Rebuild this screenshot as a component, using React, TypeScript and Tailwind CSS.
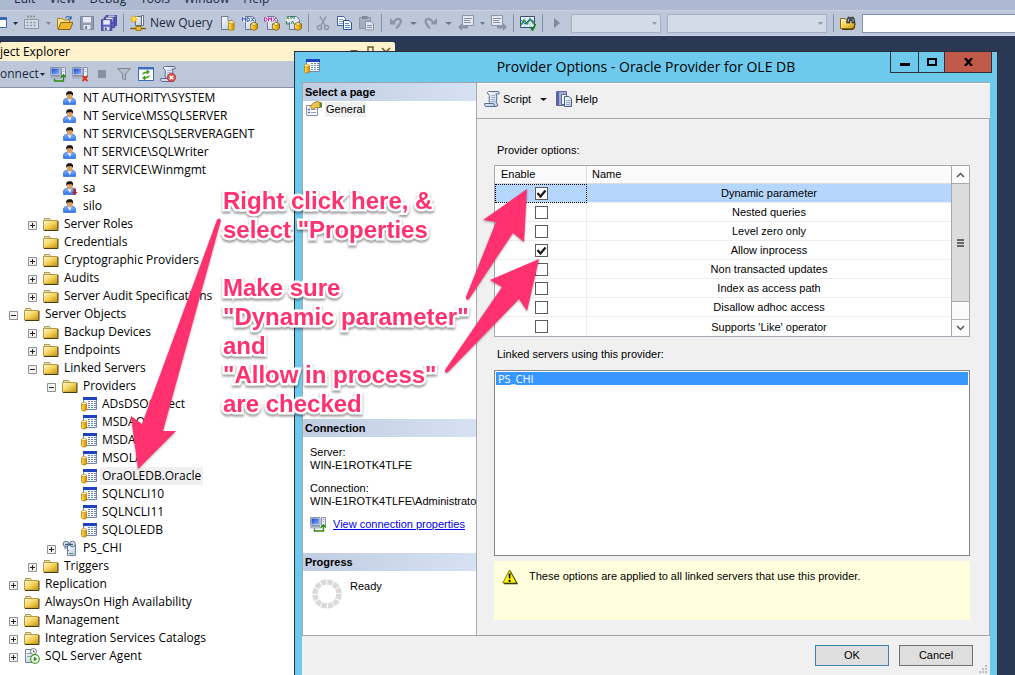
import React from "react";

type IconProps = { children: React.ReactNode; w?: number; box?: string };

function Icon({ children, w = 16, box = "w-4" }: IconProps) {
  return (
    <svg viewBox={`0 0 ${w} 16`} className={`h-4 shrink-0 ${box}`} aria-hidden="true">
      {children}
    </svg>
  );
}

function Defs() {
  return (
    <svg className="absolute h-0 w-0" aria-hidden="true">
      <defs>
        <linearGradient id="folder" x1="0" y1="0" x2="1" y2="1">
          <stop offset="0" stopColor="#fff9d8" />
          <stop offset="0.5" stopColor="#f4d257" />
          <stop offset="1" stopColor="#c48f08" />
        </linearGradient>
        <linearGradient id="drum" x1="0" y1="0" x2="1" y2="0">
          <stop offset="0" stopColor="#fbe27a" />
          <stop offset="0.5" stopColor="#f2b90f" />
          <stop offset="1" stopColor="#c78a00" />
        </linearGradient>
        <linearGradient id="shirt" x1="0" y1="0" x2="0" y2="1">
          <stop offset="0" stopColor="#9cc4ff" />
          <stop offset="1" stopColor="#2f72e8" />
        </linearGradient>
        <linearGradient id="screen" x1="0" y1="0" x2="1" y2="1">
          <stop offset="0" stopColor="#1340c8" />
          <stop offset="1" stopColor="#8ab8ff" />
        </linearGradient>
        <linearGradient id="paper" x1="0" y1="0" x2="1" y2="1">
          <stop offset="0" stopColor="#ffffff" />
          <stop offset="1" stopColor="#b4c4de" />
        </linearGradient>
      </defs>
    </svg>
  );
}

const FolderIcon = () => (
  <Icon>
    <path d="M1.500 4V2.500h5l1 1.500" fill="#f3e3a0" stroke="#a89a62" />
    <path d="M.5 4.500h14v9.500H.5z" fill="url(#folder)" stroke="#b49b4a" />
    <path d="M15 5v9.500H1" fill="none" stroke="#4c3c0c" />
  </Icon>
);

const UserIcon = ({ disabled = false }: { disabled?: boolean }) => (
  <Icon>
    <path d="M1.500 14.500v-3.500q0-2 2.500-2.500l3.500-1.500 3.500 1.500q2.500 .5 2.500 2.500v3.500z" fill="url(#shirt)" stroke="#3a76d6" strokeWidth=".8" />
    <path d="M5.500 8.500h4L8 13z" fill="#fff" />
    <path d="M5 4h5.500v3.500L8.800 9.500h-2L5 7.500z" fill="#d9a066" />
    <path d="M4.200 6V3L6 1.300h3.500L11 3v3L9.800 4.300H5.500z" fill="#1c1410" />
    {disabled && <path d="M11.500 8.500H14V12h1.500l-2.800 3.200L10 12h1.500z" fill="#b8202c" />}
  </Icon>
);

const Drum = ({ x = 0, y = 6, s = 1 }: { x?: number; y?: number; s?: number }) => (
  <g transform={`translate(${x} ${y}) scale(${s})`}>
    <path d="M.5 2v6q0 1.500 2.500 1.500T5.500 8V2z" fill="url(#drum)" stroke="#a87400" strokeWidth=".7" />
    <ellipse cx="3" cy="2" rx="2.500" ry="1.300" fill="#fff0a8" stroke="#b88a10" strokeWidth=".6" />
  </g>
);

const ProviderIcon = () => (
  <Icon>
    <path d="M2.500 1.500h13v12h-13z" fill="#f4f8ff" stroke="#6d86ba" />
    <path d="M2 1h14v3H2z" fill="#1f43bc" />
    <path d="M7 5.500h8M7 7.500h8M7 9.500h8M7 11.500h8" stroke="#7486b0" strokeDasharray="2 1" />
    <Drum x={0} y={5.500} />
  </Icon>
);

const LinkedIcon = () => (
  <Icon>
    <path d="M5.500 4.500h8v11h-8z" fill="url(#paper)" stroke="#6e83a8" />
    <path d="M7 13.500h4" stroke="#3fa33f" />
    <circle cx="4" cy="4" r="2.800" fill="#dfe8f5" stroke="#5c7396" />
    <circle cx="10.500" cy="4" r="2.800" fill="#dfe8f5" stroke="#5c7396" />
    <path d="M3 4.500h8" stroke="#3f5577" strokeWidth="1.500" />
    <path d="M2 8h4M5 10.500h2" stroke="#5c7396" />
  </Icon>
);

const AgentIcon = () => (
  <Icon>
    <path d="M1.500 1.500h9v13h-9z" fill="url(#paper)" stroke="#6d7f9c" />
    <path d="M3 5.500h5M3 8.500h5" stroke="#8fa1bd" />
    <circle cx="9.500" cy="3.500" r="3" fill="#fff" stroke="#777" />
    <path d="M9.500 2v2h1.500" fill="none" stroke="#444" strokeWidth=".8" />
    <circle cx="11" cy="11" r="4.300" fill="#f4fff0" stroke="#4c9a2e" strokeWidth="1.200" />
    <path d="M9.800 8.500v5l3.400-2.500z" fill="#2e8b1e" />
  </Icon>
);

const Down = ({ color = "#1e2a3e", box = "w-[5px]" }: { color?: string; box?: string }) => (
  <svg viewBox="0 0 6 3" preserveAspectRatio="none" className={`h-[3px] shrink-0 ${box}`} aria-hidden="true">
    <path d="M0 0h6L3 3z" fill={color} />
  </svg>
);

const Sep = () => <span className="h-[18px] w-px shrink-0 bg-[#8591a8]" />;

const ConnectIcon = ({ off = false }: { off?: boolean }) => (
  <Icon>
    <path d="M.5 1.500h9.500v8H.5z" fill="#e6e8ee" stroke="#8992a6" />
    <path d="M1.500 2.500h7.500v6H1.500z" fill="url(#screen)" />
    <path d="M1 10.500h9l1 1.500H.5z" fill="#c6ccd9" stroke="#8992a6" strokeWidth=".7" />
    <path d="M11.500 1.500h4v9h-4z" fill="#eef1f8" stroke="#8992a6" />
    <path d="M12.500 3.500h2M12.500 5.500h2" stroke="#8992a6" strokeWidth=".7" />
    {off ? (
      <path d="M10.500 10l5 5M15.500 10l-5 5" stroke="#e0301c" strokeWidth="1.800" />
    ) : (
      <path d="M4.500 12.500v2.500h9v-5M11 11.500l2.500-2.800 2.500 2.800" fill="none" stroke="#2f8a10" strokeWidth="1.400" />
    )}
  </Icon>
);

const ScriptIcon = ({ error = false }: { error?: boolean }) => (
  <Icon>
    <path d="M4 3q-1.500-2 .5-2.500H14q2 .5 1 2.500h-3q1.500 3 .5 6t1.500 5q-.5 1.500-2 1.500H2Q0 15 .8 12.500H6Q4.500 10 5.300 7T4 3z" fill="url(#paper)" stroke="#5b6e93" />
    <path d="M7 4.500h4M7.300 6.500h4M7 8.500h4M7 10.500h4" stroke="#9aabca" strokeWidth=".8" />
    <path d="M.8 12.500h8.700l1 2.500" fill="none" stroke="#5b6e93" />
    {error && (
      <>
        <circle cx="11.500" cy="11.500" r="4.200" fill="#d9534a" stroke="#a22" strokeWidth=".6" />
        <path d="M9.700 9.700l3.600 3.600M13.300 9.700l-3.600 3.600" stroke="#fff" strokeWidth="1.500" />
      </>
    )}
  </Icon>
);

const HelpIcon = () => (
  <Icon>
    <path d="M.5 .5h10v14H.5z" fill="#a3aada" stroke="#5f689e" />
    <path d="M1 1h2v13H1z" fill="#5a64a4" />
    <path d="M5.500 3.500h4.500l1.500 2v8h-6z" fill="#f2f5fc" stroke="#596c92" />
    <path d="M8.500 5.500h4.500l2.500 2.500v7.500h-7z" fill="url(#paper)" stroke="#4d5f84" />
    <path d="M10 9.500h4M10 11.500h4M10 13.500h4" stroke="#8fa0bf" strokeWidth=".8" />
  </Icon>
);

const PropertiesIcon = () => (
  <Icon>
    <path d="M.5 4.500h11v10H.5z" fill="#fdfdff" stroke="#8590a8" />
    <path d="M2 8.500h2M2 11.500h2" stroke="#3a62c8" strokeWidth="1.500" />
    <path d="M5 8.500h5M5 11.500h5" stroke="#8d9bb8" />
    <path d="M4 5.500l4-4 4-1 3 1.500v4L12 7 9.500 6.500 6.500 8.500z" fill="#f0c34a" stroke="#8a6312" strokeWidth=".8" />
    <path d="M13.500 1.500H16v5h-2.500z" fill="#4e8a3c" />
  </Icon>
);

const WarnIcon = () => (
  <Icon>
    <path d="M8 1L15.500 14.500H1z" fill="#222" transform="translate(.6 .8)" />
    <path d="M7.500 1L14.500 14H.8z" fill="#fff200" stroke="#6b6500" strokeWidth=".8" />
    <path d="M6.500 4.500h2.200l-.5 5.300H7z" fill="#000" />
    <circle cx="7.600" cy="11.900" r="1.100" fill="#000" />
  </Icon>
);

const NewQueryIcon = () => (
  <Icon>
    <path d="M5.500 1.500h6v9h-6z" fill="url(#paper)" stroke="#60708c" />
    <path d="M11.500 .5h2v10h-2z" fill="#fff" stroke="#4a5870" strokeWidth=".8" />
    <path d="M0 13.500h16" stroke="#8d6410" strokeWidth="1.500" />
    <path d="M8.500 10v2" stroke="#8d6410" strokeWidth="1.500" />
    <path d="M6 11.500h5v4H6z" fill="#f5c02a" stroke="#8a5e00" strokeWidth=".7" />
    <path d="M4 0v8M0 4h8M1.200 1.200l5.600 5.600M6.800 1.200L1.200 6.800" stroke="#f7a80a" strokeWidth="1.200" />
    <circle cx="4" cy="4" r="2" fill="#ffe44a" />
  </Icon>
);

const PlainQueryIcon = () => (
  <Icon>
    <path d="M1.500 1.500h6.500l4 4v9H1.500z" fill="url(#paper)" stroke="#6a7a98" />
    <path d="M8 1.500v4h4" fill="#dbe3f1" stroke="#6a7a98" />
    <Drum x={8} y={5} s={1.100} />
  </Icon>
);

const TypedQueryIcon = ({ tone, glyph }: { tone: string; glyph: string }) => (
  <Icon>
    <path d="M3.500 1.500h7l3 3v10h-10z" fill="url(#paper)" stroke="#6a7a98" />
    <path d="M0 2h11v5H0z" fill="#e4eaf5" />
    <path d={glyph} fill="none" stroke={tone} strokeWidth=".9" />
    <g transform="translate(8 7)">
      <path d="M.5 2l3.500-1.500L7.500 2v4.500L4 8.500.5 6.500z" fill="url(#drum)" stroke="#7d5600" strokeWidth=".7" />
      <path d="M.5 2L4 3.500 7.500 2 4 .5z" fill="#fff0a8" stroke="#7d5600" strokeWidth=".5" />
    </g>
  </Icon>
);

const glyphs = {
  mdx: "M.5 6.500v-4l1.500 2 1.500-2v4M5 2.500v4q2.500 0 2.500-2T5 2.500M9 2.500l3 4M12 2.500l-3 4",
  dmx: "M.5 2.500v4q2.500 0 2.500-2T.5 2.500M4.500 6.500v-4l1.500 2 1.500-2v4M9 2.500l3 4M12 2.500l-3 4",
  xmla: "M.5 1l2.500 3M3 1L.5 4M5 4V1l1.500 1.500L8 1v3M.5 6v3H3M5 9l1.500-3L8 9",
};

const SaveShape = ({ fill, line }: { fill: string; line: string }) => (
  <>
    <path d="M1.500 1.500h13v13h-13z" fill={fill} stroke={line} />
    <path d="M4 2h8v5.500H4z" fill="#e8ecf4" />
    <path d="M4.500 10h7v4.500h-7z" fill="#dfe4ee" />
    <path d="M6 11h2v3H6z" fill={line} />
  </>
);

function MenuBar() {
  const items = ["Edit", "View", "Debug", "Tools", "Window", "Help"];
  return (
    <nav className="flex h-[10px] shrink-0 items-end gap-[14px] overflow-hidden bg-[#adb9d0] pb-[3px] pl-[14px] text-xs leading-4 text-[#1b293e]">
      {items.map((t) => (
        <button key={t} type="button">{t}</button>
      ))}
    </nav>
  );
}

function MainToolbar() {
  const grey = "#8b95a8";
  return (
    <div className="flex h-[26px] shrink-0 items-center gap-[6px] border-y border-[#c9d2e2] bg-[#bcc7d9] text-xs text-[#1b293e]">
      <Icon w={7} box="w-[7px]">
        <path d="M-1 2.500h7.500v10H-1z" fill="#fff" stroke="#3c66b4" />
        <path d="M-1 2h8v3h-8z" fill="#3c66b4" />
      </Icon>
      <Down />
      <Icon>
        <path d="M.5 4.500h14v9H.5z" fill="#d5dae4" stroke={grey} />
        <path d="M3 1.500h9" stroke={grey} strokeWidth="2" strokeDasharray="2 1" />
        <path d="M2.500 7.500h10M2.500 10.500h10" stroke={grey} strokeWidth="1.500" strokeDasharray="2 1.500" />
      </Icon>
      <Down color="#7d8799" />
      <Icon>
        <path d="M.5 13.500v-10h5l1.500 1.500h5.500v3" fill="#f7e08a" stroke="#a9801b" />
        <path d="M1 14.500l3-7h12l-3 7z" fill="#f0b82e" stroke="#8a5f08" />
        <path d="M8.500 3q2.500-3 5 0M14 1v3h-3" fill="none" stroke="#2f5ea8" strokeWidth="1.200" />
      </Icon>
      <Icon><SaveShape fill="#929cae" line="#7b8598" /></Icon>
      <Icon>
        <g transform="translate(4 -1) scale(.8)"><SaveShape fill="#5a5fc4" line="#34388c" /></g>
        <g transform="translate(2 1) scale(.8)"><SaveShape fill="#5a5fc4" line="#34388c" /></g>
        <g transform="translate(-1 3.500) scale(.82)"><SaveShape fill="#5a5fc4" line="#34388c" /></g>
      </Icon>
      <Sep />
      <button type="button" className="flex items-center gap-1 pr-px whitespace-nowrap">
        <NewQueryIcon />
        New Query
      </button>
      <PlainQueryIcon />
      <TypedQueryIcon tone="#2c50b0" glyph={glyphs.mdx} />
      <TypedQueryIcon tone="#b8209c" glyph={glyphs.dmx} />
      <TypedQueryIcon tone="#1f7a3c" glyph={glyphs.xmla} />
      <Sep />
      <Icon>
        <path d="M5 1.500l5 9M11 1.500l-5 9" stroke={grey} strokeWidth="1.500" />
        <circle cx="4.500" cy="12.500" r="2" fill="none" stroke={grey} strokeWidth="1.400" />
        <circle cx="11.500" cy="12.500" r="2" fill="none" stroke={grey} strokeWidth="1.400" />
      </Icon>
      <Icon>
        <path d="M.5 1.500h6l2 2v7h-8z" fill="#fff" stroke="#3c5fa8" />
        <path d="M2 4.500h4M2 6.500h5M2 8.500h5" stroke="#7d9bd6" />
        <path d="M6.500 5.500h5.500l2.500 2.500v6.500H6.500z" fill="#fff" stroke="#27509c" />
        <path d="M8 8.500h4M8 10.500h5M8 12.500h5" stroke="#5b84d0" />
      </Icon>
      <Icon>
        <path d="M.5 2.500h11v11H.5z" fill="#a7afbe" stroke={grey} />
        <path d="M3 1h5.500v3H3z" fill="#7f899c" />
        <path d="M6.500 6.500h5.500l2.500 2.500v6h-8z" fill="#dde2eb" stroke={grey} />
        <path d="M8 10.500h5M8 12.500h5" stroke={grey} />
      </Icon>
      <Sep />
      <Icon>
        <path d="M3 7h3Q9 2.500 12 4.500t-4 9" fill="none" stroke={grey} strokeWidth="2.200" />
        <path d="M2 3v6.500h6.500z" fill={grey} />
      </Icon>
      <Down color="#6d778a" box="w-[7px]" />
      <Icon>
        <path d="M12 7H9.500Q6.500 2.500 3.500 4.500T7 13.500" fill="none" stroke={grey} strokeWidth="2.200" />
        <path d="M14 3v6.500H7.500z" fill={grey} />
      </Icon>
      <Down color="#6d778a" box="w-[7px]" />
      <Icon>
        <path d="M4.500 .5h11v10h-11z" fill="#e3e7ef" stroke={grey} />
        <path d="M6 3.500h8M6 5.500h6M6 7.500h7" stroke={grey} />
        <path d="M0 12l4-4v2.500h6v3H4V16z" fill={grey} />
      </Icon>
      <Down color="#6d778a" />
      <Icon>
        <path d="M.5 .5h11v10H.5z" fill="#e3e7ef" stroke={grey} />
        <path d="M2 3.500h8M2 5.500h6M2 7.500h7" stroke={grey} />
        <path d="M16 12l-4-4v2.500H6v3h6V16z" fill={grey} />
      </Icon>
      <Sep />
      <Icon>
        <path d="M.5 1.500h14v11H.5z" fill="#e8f3ff" stroke="#3b4e74" />
        <path d="M1 5.500h13M1 9h13M5 2v10M10 2v10" stroke="#a8c2de" strokeWidth=".7" />
        <path d="M1 10l3-5 3 4 3-5 4 5" fill="none" stroke="#2c9a2c" strokeWidth="1.500" />
        <path d="M1 5l4 4 5-5 4 3" fill="none" stroke="#3157bf" />
        <path d="M10.500 12l2 3 3-6" fill="none" stroke="#148214" strokeWidth="1.800" />
      </Icon>
      <Sep />
      <Icon><path d="M5 3l6 5L5 13z" fill="#7f8a9e" /></Icon>
      <button type="button" aria-label="Database" className="flex h-[19px] w-[90px] shrink-0 items-center justify-end border border-[#a3afc4] bg-[#d3dbe8] pr-[3px]">
        <Down color="#8d98ab" />
      </button>
      <button type="button" aria-label="Configuration" className="flex h-[19px] w-40 shrink-0 items-center justify-end border border-[#a3afc4] bg-[#d3dbe8] pr-[3px]">
        <Down color="#8d98ab" />
      </button>
      <Sep />
      <Icon>
        <path d="M.5 13.500v-10h4.500L6.500 5h8v8.500z" fill="url(#folder)" stroke="#8a6a14" />
        <path d="M2 14.500h11l2.500-6" fill="none" stroke="#4c3c0c" />
        <path d="M6.500 8l1-5q1-2 2.500-.5h1.500q1.500-1.500 2.500 .5l1 5h-3V5.500h-2V8z" fill="#4a4e58" stroke="#23252c" strokeWidth=".6" />
        <path d="M8.500 4v2.500M13 4v2.500" stroke="#c8ccd6" strokeWidth=".8" />
      </Icon>
      <input aria-label="Find" className="h-[19px] min-w-0 flex-1 border border-r-0 border-[#8591a8] bg-white px-1" />
    </div>
  );
}

type Node = { label: string; depth: 0 | 1 | 2 | 3; sign?: "+" | "-"; icon: () => React.ReactElement; selected?: boolean };

const DisabledUser = () => <UserIcon disabled />;
const User = () => <UserIcon />;

const tree: Node[] = [
  { label: "NT AUTHORITY\\SYSTEM", depth: 2, icon: User },
  { label: "NT Service\\MSSQLSERVER", depth: 2, icon: User },
  { label: "NT SERVICE\\SQLSERVERAGENT", depth: 2, icon: User },
  { label: "NT SERVICE\\SQLWriter", depth: 2, icon: User },
  { label: "NT SERVICE\\Winmgmt", depth: 2, icon: User },
  { label: "sa", depth: 2, icon: DisabledUser },
  { label: "silo", depth: 2, icon: User },
  { label: "Server Roles", depth: 1, sign: "+", icon: FolderIcon },
  { label: "Credentials", depth: 1, icon: FolderIcon },
  { label: "Cryptographic Providers", depth: 1, sign: "+", icon: FolderIcon },
  { label: "Audits", depth: 1, sign: "+", icon: FolderIcon },
  { label: "Server Audit Specifications", depth: 1, sign: "+", icon: FolderIcon },
  { label: "Server Objects", depth: 0, sign: "-", icon: FolderIcon },
  { label: "Backup Devices", depth: 1, sign: "+", icon: FolderIcon },
  { label: "Endpoints", depth: 1, sign: "+", icon: FolderIcon },
  { label: "Linked Servers", depth: 1, sign: "-", icon: FolderIcon },
  { label: "Providers", depth: 2, sign: "-", icon: FolderIcon },
  { label: "ADsDSOObject", depth: 3, icon: ProviderIcon },
  { label: "MSDAOSP", depth: 3, icon: ProviderIcon },
  { label: "MSDASQL", depth: 3, icon: ProviderIcon },
  { label: "MSOLAP", depth: 3, icon: ProviderIcon },
  { label: "OraOLEDB.Oracle", depth: 3, icon: ProviderIcon, selected: true },
  { label: "SQLNCLI10", depth: 3, icon: ProviderIcon },
  { label: "SQLNCLI11", depth: 3, icon: ProviderIcon },
  { label: "SQLOLEDB", depth: 3, icon: ProviderIcon },
  { label: "PS_CHI", depth: 2, sign: "+", icon: LinkedIcon },
  { label: "Triggers", depth: 1, sign: "+", icon: FolderIcon },
  { label: "Replication", depth: 0, sign: "+", icon: FolderIcon },
  { label: "AlwaysOn High Availability", depth: 0, icon: FolderIcon },
  { label: "Management", depth: 0, sign: "+", icon: FolderIcon },
  { label: "Integration Services Catalogs", depth: 0, sign: "+", icon: FolderIcon },
  { label: "SQL Server Agent", depth: 0, sign: "+", icon: AgentIcon },
];

const indent = ["pl-[9px]", "pl-[28px]", "pl-[47px]", "pl-[66px]"];

function TreeRow({ node }: { node: Node }) {
  const NodeIcon = node.icon;
  return (
    <li role="treeitem" className={`flex h-[18px] items-center ${indent[node.depth]}`}>
      <svg viewBox="0 0 9 9" className="mt-[2px] mr-[6px] h-[9px] w-[9px] shrink-0" aria-hidden="true">
        {node.sign && (
          <>
            <path d="M.5.5h8v8h-8z" fill="#f2f2f2" stroke="#919191" />
            <path d={node.sign === "+" ? "M2 4.500h5M4.500 2v5" : "M2 4.500h5"} stroke="#222" />
          </>
        )}
      </svg>
      <NodeIcon />
      <span className={`ml-[3px] px-[2px] leading-[18px] whitespace-nowrap ${node.selected ? "bg-[#f0f0f0]" : ""}`}>{node.label}</span>
    </li>
  );
}

function ObjectExplorer() {
  return (
    <section className="mt-[6px] flex w-[395px] flex-1 flex-col overflow-hidden rounded-t-[3px] bg-white text-xs">
      <header className="flex h-[19px] shrink-0 items-center justify-between bg-[#fff2cc] pr-1">
        <h2>ject Explorer</h2>
        <svg viewBox="0 0 44 12" className="h-3 w-11" aria-hidden="true">
          <path d="M3 4h8L7 8z" fill="#6b5a35" />
          <path d="M21 1h5v7h-5zM19 8.500h9M23.500 9v3" fill="none" stroke="#6b5a35" strokeWidth="1.500" />
          <path d="M35 2l8 8M43 2l-8 8" stroke="#6b5a35" strokeWidth="1.700" />
        </svg>
      </header>
      <div className="flex h-[27px] shrink-0 items-center gap-[6px] border-b border-[#8591a8] bg-[#bcc7d9] text-[#1b293e]">
        <button type="button" className="flex w-11 items-center gap-px">
          onnect
          <Down />
        </button>
        <ConnectIcon />
        <ConnectIcon off />
        <Icon><path d="M4 4h8v8H4z" fill="#8a909b" /></Icon>
        <Icon><path d="M1.500 2.500h13L9.500 8v6l-3-1.500V8z" fill="#b4bac6" stroke="#7d8798" /></Icon>
        <Icon>
          <path d="M.5 1.500h15v13H.5z" fill="#fff" stroke="#3c6bbf" />
          <path d="M0 1h16v2.500H0z" fill="#3c6bbf" />
          <path d="M4.500 8.500Q5 5.500 8.500 6H11M9 4v4l2.500-2zM11.500 9.500Q11 12 7.500 12H5M7 10v4l-2.500-2z" fill="#3a9a10" stroke="#3a9a10" strokeWidth=".8" />
        </Icon>
        <ScriptIcon error />
      </div>
      <ul role="tree" aria-label="Object Explorer" className="pt-px">
        {tree.map((n) => <TreeRow key={n.label} node={n} />)}
      </ul>
    </section>
  );
}

const options = [
  { name: "Dynamic parameter", on: true },
  { name: "Nested queries", on: false },
  { name: "Level zero only", on: false },
  { name: "Allow inprocess", on: true },
  { name: "Non transacted updates", on: false },
  { name: "Index as access path", on: false },
  { name: "Disallow adhoc access", on: false },
  { name: "Supports 'Like' operator", on: false },
];

function OptionsGrid() {
  return (
    <div className="flex border border-[#a5a8b0] bg-white">
      <table className="w-full flex-1 table-fixed border-separate border-spacing-0">
        <thead>
          <tr className="h-[18px] bg-[#fbfbfb] text-left">
            <th className="w-[92px] border-r border-b border-[#dcdcdc] p-0 pl-[6px] font-normal">Enable</th>
            <th className="border-b border-[#dcdcdc] p-0 pl-[5px] font-normal">Name</th>
          </tr>
        </thead>
        <tbody>
          {options.map((o, i) => (
            <tr key={o.name} className={`group h-[19px] ${i === 0 ? "bg-[#b5d7fd]" : ""}`}>
              <td className={`border-r border-b border-[#ededed] p-0 pl-px group-last:border-b-0 ${i === 0 ? "outline-1 -outline-offset-1 outline-dotted outline-black" : ""}`}>
                <span className="relative mx-auto block h-[13px] w-[13px]">
                  <input
                    type="checkbox"
                    defaultChecked={o.on}
                    aria-label={o.name}
                    className="peer block h-[13px] w-[13px] appearance-none border border-[#5c5c5c] bg-white"
                  />
                  <svg viewBox="0 0 13 13" className="pointer-events-none absolute inset-0 hidden h-[13px] w-[13px] peer-checked:block" aria-hidden="true">
                    <path d="M2.500 6l3 3.500 5-6" fill="none" stroke="#1a1a1a" strokeWidth="2.200" />
                  </svg>
                </span>
              </td>
              <td className="border-b border-[#ededed] p-0 pt-px text-center group-last:border-b-0">{o.name}</td>
            </tr>
          ))}
        </tbody>
      </table>
      <div className="flex w-[18px] shrink-0 flex-col border-l border-[#a5a8b0] bg-[#fbfbfb]">
        <button type="button" aria-label="Scroll up" className="flex h-[17px] items-center justify-center">
          <svg viewBox="0 0 9 6" className="h-[6px] w-[9px]"><path d="M1 5l3.500-3.500L8 5" fill="none" stroke="#555" strokeWidth="1.500" /></svg>
        </button>
        <div className="flex h-[119px] items-center justify-center border-y border-[#a5a8b0] bg-[#dcdcdc]">
          <svg viewBox="0 0 7 8" className="h-2 w-[7px]"><path d="M0 1h7M0 4h7M0 7h7" stroke="#666" strokeWidth="2" /></svg>
        </div>
        <div className="flex-1" />
        <button type="button" aria-label="Scroll down" className="flex h-[17px] items-center justify-center border-t border-[#b8b8b8]">
          <svg viewBox="0 0 9 6" className="h-[6px] w-[9px]"><path d="M1 1l3.500 3.500L8 1" fill="none" stroke="#555" strokeWidth="1.500" /></svg>
        </button>
      </div>
    </div>
  );
}

const SideHead = ({ children }: { children: string }) => (
  <h3 className="h-[18px] shrink-0 bg-linear-to-r from-[#c0cde2] to-[#d6e2f2] pl-[2px] leading-[18px] font-bold">{children}</h3>
);

function Sidebar() {
  return (
    <aside className="flex w-[175px] shrink-0 flex-col border-x border-[#a5a8b0] bg-white">
      <SideHead>Select a page</SideHead>
      <div className="flex flex-1 items-start gap-[3px] pl-[3px]">
        <PropertiesIcon />
        <button type="button" className="mt-px bg-[#f0f0f0] px-px leading-[15px]">General</button>
      </div>
      <SideHead>Connection</SideHead>
      <div className="flex h-[116px] shrink-0 flex-col gap-[10px] pt-[9px] pl-[7px] leading-[13px]">
        <p>Server:<br />WIN-E1ROTK4TLFE</p>
        <p className="whitespace-nowrap">Connection:<br />WIN-E1ROTK4TLFE\Administrato</p>
        <div className="-mt-[2px] flex items-center gap-[7px]">
          <ConnectIcon />
          <a href="#connection" className="text-[#0000ee] underline">View connection properties</a>
        </div>
      </div>
      <SideHead>Progress</SideHead>
      <div className="flex h-16 shrink-0 items-start gap-2 pt-2 pl-[9px]">
        <svg viewBox="0 0 30 30" className="h-[30px] w-[30px]" aria-hidden="true">
          <circle cx="15" cy="15" r="12" fill="none" stroke="#dadada" strokeWidth="5.500" strokeDasharray="5.280 1" />
        </svg>
        <span className="leading-[15px]">Ready</span>
      </div>
    </aside>
  );
}

function ProviderDialog() {
  return (
    <section
      role="dialog"
      aria-label="Provider Options"
      className="absolute top-[51px] right-[17px] bottom-0 left-[294px] flex flex-col border border-b-0 border-[#2c3038] bg-[#6dcaed] px-[7px] font-['Liberation_Sans',Arial,sans-serif] text-[11px] leading-[13px]"
    >
      <header className="relative flex h-[30px] shrink-0 items-center justify-center">
        <span className="absolute top-[6px] left-[2px]"><ProviderIcon /></span>
        <h1 className="font-['Open_Sans',sans-serif] text-sm leading-5">Provider Options - Oracle Provider for OLE DB</h1>
        <div className="absolute -top-px -right-[2px] flex h-[22px] border border-[#2c3038] text-black">
          <button type="button" aria-label="Minimize" className="flex w-7 items-center justify-center border-r border-[#2c3038]">
            <span className="mt-1 h-[3px] w-[10px] bg-black" />
          </button>
          <button type="button" aria-label="Maximize" className="flex w-[26px] items-center justify-center border-r border-[#2c3038]">
            <span className="h-2 w-[10px] border-2 border-black" />
          </button>
          <button type="button" aria-label="Close" className="flex w-[46px] items-center justify-center bg-[#c15a4b]">
            <svg viewBox="0 0 9 8" className="h-2 w-[9px]"><path d="M1 0l7 8M8 0L1 8" stroke="#000" strokeWidth="2.200" /></svg>
          </button>
        </div>
      </header>
      <div className="flex min-h-0 flex-1 border-y border-[#a0a4ac] bg-[#f0f0f0]">
        <Sidebar />
        <main className="flex min-w-0 flex-1 flex-col">
          <div className="flex h-9 shrink-0 items-center gap-2 border-b border-[#a5a8b0] pb-[3px] pl-[7px] shadow-[inset_0_1px_#fff]">
            <button type="button" className="flex items-center gap-[3px]"><ScriptIcon />Script</button>
            <button type="button" aria-label="Script options" className="flex w-[9px] justify-center"><Down box="w-[7px]" color="#111" /></button>
            <button type="button" className="flex items-center gap-[3px]"><HelpIcon />Help</button>
          </div>
          <div className="flex min-h-0 flex-1 flex-col border-r border-[#a5a8b0] pt-[25px] pr-[19px] pb-[15px] pl-[17px]">
            <h2 className="mb-2 pl-[3px]">Provider options:</h2>
            <OptionsGrid />
            <h2 className="mt-[11px] mb-[9px] pl-[3px]">Linked servers using this provider:</h2>
            <ul role="listbox" aria-label="Linked servers" className="min-h-0 flex-1 border border-[#83868f] bg-white p-px">
              <li role="option" aria-selected="true" className="bg-[#3897ff] pl-[2px] font-['Open_Sans',sans-serif] text-white">PS_CHI</li>
            </ul>
            <div className="mt-[5px] flex h-[59px] shrink-0 gap-[11px] bg-[#ffffdd] pt-2 pl-2">
              <WarnIcon />
              <p className="leading-[15px]">These options are applied to all linked servers that use this provider.</p>
            </div>
          </div>
        </main>
      </div>
      <footer className="relative flex h-[39px] shrink-0 items-start justify-end gap-[10px] bg-[#f0f0f0] pt-[9px] pr-[17px]">
        <button type="button" className="h-[21px] w-[74px] border border-[#3c7fb1] bg-[#dedede]">OK</button>
        <button type="button" className="h-[21px] w-[74px] border border-[#707070] bg-[#dedede]">Cancel</button>
        <svg viewBox="0 0 9 9" className="absolute right-[2px] bottom-[1px] h-[9px] w-[9px]" aria-hidden="true">
          <path d="M6 0h2v2H6zM3 3h2v2H3zM6 3h2v2H6zM0 6h2v2H0zM3 6h2v2H3zM6 6h2v2H6z" fill="#c0c0c0" />
        </svg>
      </footer>
    </section>
  );
}

function Annotations() {
  return (
    <div className="pointer-events-none absolute inset-0 overflow-hidden">
      <svg viewBox="0 0 1015 675" className="absolute top-0 left-0 h-[675px] w-[1015px] drop-shadow-[0_1px_1px_rgba(0,0,0,0.35)]" aria-hidden="true">
        <g fill="#ff316f">
          <path d="M217 220q2-3 4 0L163 431l13 0L138 469 131 416l11 8z" />
          <path d="M466 297L496 222l-13-2L527 189l-3 53-11-9L469 299q-3 2-3-2z" />
          <path d="M445 370L502 287l-12-7L539 259l-12 52-8-12L448 372q-3 2-3-2z" />
        </g>
      </svg>
      <div className="absolute top-[186px] left-[223px] font-['Liberation_Sans',Arial,sans-serif] text-2xl leading-[29px] font-bold whitespace-nowrap text-[#ff316f] drop-shadow-[0_2px_1px_rgba(0,0,0,0.4)] [-webkit-text-stroke:5px_white] [paint-order:stroke_fill]">
        <p className="mb-[29px]">Right click here, &amp;<br />select "Properties</p>
        <p>Make sure<br />"Dynamic parameter"<br />and<br />"Allow in process"<br />are checked</p>
      </div>
    </div>
  );
}

export default function App() {
  return (
    <div className="relative flex h-screen min-h-[675px] flex-col overflow-hidden bg-[#2a3855] font-['Open_Sans',sans-serif] text-black">
      <Defs />
      <MenuBar />
      <MainToolbar />
      <ObjectExplorer />
      <ProviderDialog />
      <Annotations />
    </div>
  );
}
